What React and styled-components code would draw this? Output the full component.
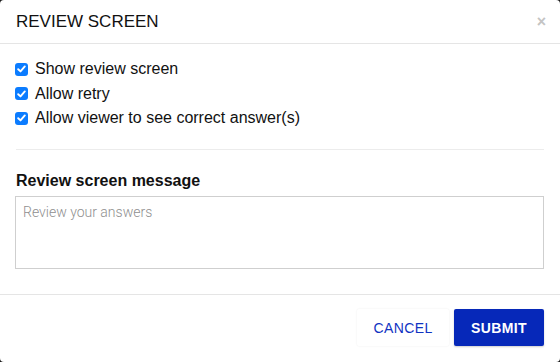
import React from "react";
import styled, { createGlobalStyle } from "styled-components";

const Global = createGlobalStyle`
  html, body { margin: 0; padding: 0; background: #1a1a1a; }
  body { font-family: "Liberation Sans", Arial, sans-serif; }
  * { box-sizing: border-box; }
`;

const Modal = styled.div`
  width: 560px;
  height: 362px;
  background: #fff;
  border-radius: 4px;
  display: flex;
  flex-direction: column;
  overflow: hidden;
`;

const Header = styled.div`
  height: 44px;
  border-bottom: 1px solid #e5e5e5;
  display: flex;
  align-items: center;
  justify-content: space-between;
  padding: 0 16px 0 16px;
`;

const Title = styled.h4`
  margin: 0;
  font-size: 17px;
  font-weight: 400;
  color: #111;
  padding-top: 1px;
`;

const Close = styled.button`
  border: 0;
  background: none;
  padding: 0;
  color: #c4c4c4;
  font-size: 16px;
  font-weight: 700;
  line-height: 1;
  font-family: "Liberation Sans", Arial, sans-serif;
  margin-right: -2px;
  margin-top: 1px;
`;

const Body = styled.div`
  padding: 16px 16px 0 16px;
  flex: 1;
`;

const CheckList = styled.div`
  display: flex;
  flex-direction: column;
  gap: 6px;
  padding-bottom: 21px;
  border-bottom: 1px solid #ececec;
`;

const CheckRow = styled.label`
  display: flex;
  align-items: center;
  gap: 7px;
  font-size: 16px;
  color: #111;
  height: 18.5px;
`;

const Box = styled.span`
  width: 13px;
  height: 13px;
  border-radius: 3px;
  background: #0b7cff;
  display: inline-flex;
  align-items: center;
  justify-content: center;
  margin-left: -1px;
  flex: none;
`;

const Label = styled.div`
  font-size: 16px;
  font-weight: 700;
  color: #111;
  margin-top: 22px;
  margin-bottom: 6px;
`;

const TextArea = styled.textarea`
  display: block;
  width: 529px;
  height: 73px;
  margin-left: -1px;
  border: 1px solid #cfcfcf;
  border-radius: 0;
  resize: none;
  padding: 7px 7px;
  font-family: Roboto, "Liberation Sans", sans-serif;
  font-weight: 300;
  font-size: 14px;
  color: #333;
  &::placeholder { color: #8f8f8f; }
`;

const Footer = styled.div`
  height: 68px;
  border-top: 1px solid #e5e5e5;
  display: flex;
  justify-content: flex-end;
  align-items: flex-start;
  gap: 5px;
  padding: 14px 16px 0 0;
`;

const Button = styled.button`
  height: 37px;
  width: ${(p) => (p.$primary ? "90px" : "92px")};
  padding: 0;
  border-radius: 2px;
  border: 0;
  font-family: "Liberation Sans", Arial, sans-serif;
  font-size: 14px;
  letter-spacing: 0.4px;
  font-weight: ${(p) => (p.$primary ? 700 : 400)};
  background: ${(p) => (p.$primary ? "#0628b9" : "#fff")};
  color: ${(p) => (p.$primary ? "#fff" : "#1033c2")};
  box-shadow: ${(p) =>
    p.$primary ? "0 1px 2px rgba(0,0,0,0.2)" : "0 0 2px rgba(0,0,0,0.08)"};
`;

const Check = () => (
  <Box>
    <svg width="9" height="8" viewBox="0 0 9 8">
      <path d="M1.2 4.2 L3.5 6.4 L7.8 1.4" fill="none" stroke="#fff" strokeWidth="1.9" strokeLinecap="round" strokeLinejoin="round" />
    </svg>
  </Box>
);

export default function App() {
  const items = ["Show review screen", "Allow retry", "Allow viewer to see correct answer(s)"];
  return (
    <>
      <Global />
      <Modal>
        <Header>
          <Title>REVIEW SCREEN</Title>
          <Close aria-label="close">×</Close>
        </Header>
        <Body>
          <CheckList>
            {items.map((t) => (
              <CheckRow key={t}>
                <Check />
                {t}
              </CheckRow>
            ))}
          </CheckList>
          <Label>Review screen message</Label>
          <TextArea placeholder="Review your answers" />
        </Body>
        <Footer>
          <Button>CANCEL</Button>
          <Button $primary>SUBMIT</Button>
        </Footer>
      </Modal>
    </>
  );
}
